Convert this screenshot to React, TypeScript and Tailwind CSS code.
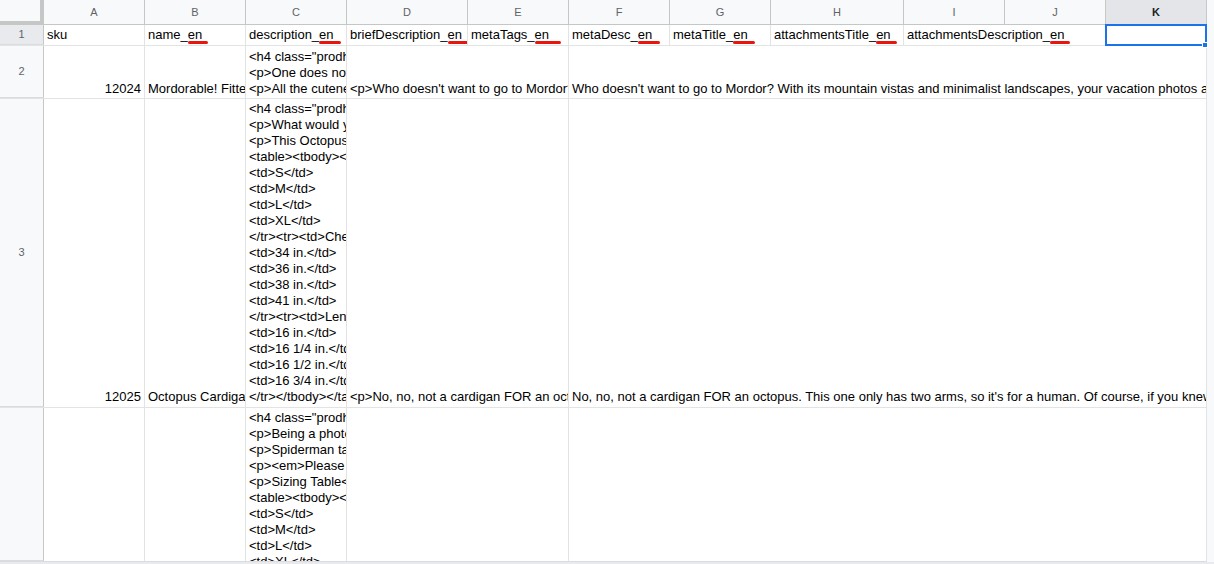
import React from "react";

const GRID = "border-[#e2e3e3]";

function U({ children, w }: { children: React.ReactNode; w: string }) {
  return (
    <span className="relative">
      {children}
      <span className={"absolute left-0 top-[14px] h-[3px] rounded-full bg-[#e8160f] " + w} />
    </span>
  );
}

function ColHead({ label, w, sel }: { label: string; w: string; sel?: boolean }) {
  return (
    <div
      className={
        "shrink-0 h-full border-r border-b border-[#c4c7c5] flex items-center justify-center text-[11px] " +
        w +
        (sel ? " bg-[#e3e5e8] text-[#202124] font-bold" : " bg-[#f8f9fa] text-[#5f6368]")
      }
    >
      {label}
    </div>
  );
}

function RowHead({ n, sel }: { n?: string; sel?: boolean }) {
  return (
    <div
      className={
        "shrink-0 w-[44px] h-full border-r border-r-[#c4c7c5] border-b border-b-[#dadce0] flex items-center justify-center text-[11px] text-[#5f6368] " +
        (sel ? "bg-[#e8eaed]" : "bg-[#f8f9fa]")
      }
    >
      {n}
    </div>
  );
}

function Cell({
  w,
  children,
  right,
  top,
  pb1,
}: {
  w: string;
  children?: React.ReactNode;
  right?: boolean;
  top?: boolean;
  pb1?: boolean;
}) {
  return (
    <div
      className={
        "shrink-0 h-full border-r " +
        GRID +
        " overflow-hidden flex flex-col px-[3px] " +
        (top ? "justify-start pt-[2px] " : pb1 ? "justify-end pb-[1px] " : "justify-end pb-[2px] ") +
        (right ? "items-end " : "items-start ") +
        w
      }
    >
      {children}
    </div>
  );
}

function Lines({ lines }: { lines: string[] }) {
  return (
    <>
      {lines.map((l, i) => (
        <div key={i} className="whitespace-pre leading-[16px]">
          {l}
        </div>
      ))}
    </>
  );
}

const row3C = [
  '<h4 class="prodhead">Octopus Cardigan</h4>',
  "<p>What would you do with eight arms?</p>",
  "<p>This Octopus Cardigan is knit</p>",
  "<table><tbody><tr><td></td>",
  "<td>S</td>",
  "<td>M</td>",
  "<td>L</td>",
  "<td>XL</td>",
  "</tr><tr><td>Chest</td>",
  "<td>34 in.</td>",
  "<td>36 in.</td>",
  "<td>38 in.</td>",
  "<td>41 in.</td>",
  "</tr><tr><td>Length</td>",
  "<td>16 in.</td>",
  "<td>16 1/4 in.</td>",
  "<td>16 1/2 in.</td>",
  "<td>16 3/4 in.</td>",
  "</tr></tbody></table>",
];

const row4C = [
  '<h4 class="prodhead">Spiderman Tee</h4>',
  "<p>Being a photographer is hard</p>",
  "<p>Spiderman takes pictures</p>",
  "<p><em>Please note</em></p>",
  "<p>Sizing Table</p>",
  "<table><tbody><tr><td></td>",
  "<td>S</td>",
  "<td>M</td>",
  "<td>L</td>",
  "<td>XL</td>",
  "</tr><tr><td>Chest</td>",
];

export default function App() {
  return (
    <div className="w-[1214px] h-[564px] overflow-hidden bg-white flex flex-col font-['Liberation_Sans',Arial,sans-serif] text-[13px] text-black">
      <div className="flex flex-1 min-h-0">
        <div className="w-[1207px] shrink-0 flex flex-col">
          {/* column headers */}
          <div className="flex h-[25px] shrink-0">
            <div className="shrink-0 w-[44px] h-full bg-[#f8f9fa] border-r-4 border-b-4 border-[#c4c7c5]" />
            <ColHead label="A" w="w-[101px]" />
            <ColHead label="B" w="w-[101px]" />
            <ColHead label="C" w="w-[101px]" />
            <ColHead label="D" w="w-[121px]" />
            <ColHead label="E" w="w-[101px]" />
            <ColHead label="F" w="w-[101px]" />
            <ColHead label="G" w="w-[101px]" />
            <ColHead label="H" w="w-[133px]" />
            <ColHead label="I" w="w-[101px]" />
            <ColHead label="J" w="w-[101px]" />
            <ColHead label="K" w="w-[101px]" sel />
          </div>

          {/* row 1 */}
          <div className={"flex h-[21px] shrink-0 border-b " + GRID}>
            <RowHead n="1" sel />
            <Cell w="w-[101px]">
              <div className="whitespace-pre leading-[16px]">sku</div>
            </Cell>
            <Cell w="w-[101px]">
              <div className="whitespace-pre leading-[16px]">
                name_<U w="w-[20px]">en</U>
              </div>
            </Cell>
            <Cell w="w-[101px]">
              <div className="whitespace-pre leading-[16px]">
                description_<U w="w-[22px]">en</U>
              </div>
            </Cell>
            <Cell w="w-[121px]">
              <div className="whitespace-pre leading-[16px]">
                briefDescription_<U w="w-[22px]">en</U>
              </div>
            </Cell>
            <Cell w="w-[101px]">
              <div className="whitespace-pre leading-[16px]">
                metaTags_<U w="w-[26px]">en</U>
              </div>
            </Cell>
            <Cell w="w-[101px]">
              <div className="whitespace-pre leading-[16px]">
                metaDesc_<U w="w-[22px]">en</U>
              </div>
            </Cell>
            <Cell w="w-[101px]">
              <div className="whitespace-pre leading-[16px]">
                metaTitle_<U w="w-[22px]">en</U>
              </div>
            </Cell>
            <Cell w="w-[133px]">
              <div className="whitespace-pre leading-[16px]">
                attachmentsTitle_<U w="w-[21px]">en</U>
              </div>
            </Cell>
            <Cell w="w-[202px]">
              <div className="whitespace-pre leading-[16px]">
                attachmentsDescription_<U w="w-[20px]">en</U>
              </div>
            </Cell>
            <div className="shrink-0 w-[101px] h-full relative border-r border-[#e2e3e3]">
              <div className="absolute -left-[1px] -top-[1px] w-[102px] h-[22px] border-2 border-[#1a73e8]" />
              <div className="absolute right-[-2px] bottom-[-3px] w-[6px] h-[6px] bg-[#1a73e8] border border-white" />
            </div>
          </div>

          {/* row 2 */}
          <div className={"flex h-[53px] shrink-0 border-b " + GRID}>
            <RowHead n="2" />
            <Cell w="w-[101px]" right pb1>
              <Lines lines={["12024"]} />
            </Cell>
            <Cell w="w-[101px]" pb1>
              <Lines lines={["Mordorable! Fitted Tee"]} />
            </Cell>
            <Cell w="w-[101px]" pb1>
              <Lines
                lines={[
                  '<h4 class="prodhead">Mordorable!</h4>',
                  "<p>One does not simply walk</p>",
                  "<p>All the cuteness of Mordor</p>",
                ]}
              />
            </Cell>
            <Cell w="w-[222px]" pb1>
              <Lines lines={["<p>Who doesn't want to go to Mordor? With its mountain vistas</p>"]} />
            </Cell>
            <Cell w="w-[638px]" pb1>
              <Lines
                lines={[
                  "Who doesn't want to go to Mordor? With its mountain vistas and minimalist landscapes, your vacation photos are sure to be epic.",
                ]}
              />
            </Cell>
          </div>

          {/* row 3 */}
          <div className={"flex h-[309px] shrink-0 border-b " + GRID}>
            <RowHead n="3" />
            <Cell w="w-[101px]" right>
              <Lines lines={["12025"]} />
            </Cell>
            <Cell w="w-[101px]">
              <Lines lines={["Octopus Cardigan"]} />
            </Cell>
            <Cell w="w-[101px]">
              <Lines lines={row3C} />
            </Cell>
            <Cell w="w-[222px]">
              <Lines lines={["<p>No, no, not a cardigan FOR an octopus. This one only has two arms</p>"]} />
            </Cell>
            <Cell w="w-[638px]">
              <Lines
                lines={[
                  "No, no, not a cardigan FOR an octopus. This one only has two arms, so it's for a human. Of course, if you knew an octopus who wanted one",
                ]}
              />
            </Cell>
          </div>

          {/* row 4 */}
          <div className={"flex h-[154px] shrink-0 border-b border-[#dadce0]"}>
            <RowHead />
            <Cell w="w-[101px]" />
            <Cell w="w-[101px]" />
            <Cell w="w-[101px]" top>
              <Lines lines={row4C} />
            </Cell>
            <Cell w="w-[222px]" />
            <Cell w="w-[638px]" />
          </div>
        </div>
        <div className="flex-1 bg-[#f8f9fa]" />
      </div>
      <div className="h-[2px] shrink-0 bg-[#e8eaed]" />
    </div>
  );
}
